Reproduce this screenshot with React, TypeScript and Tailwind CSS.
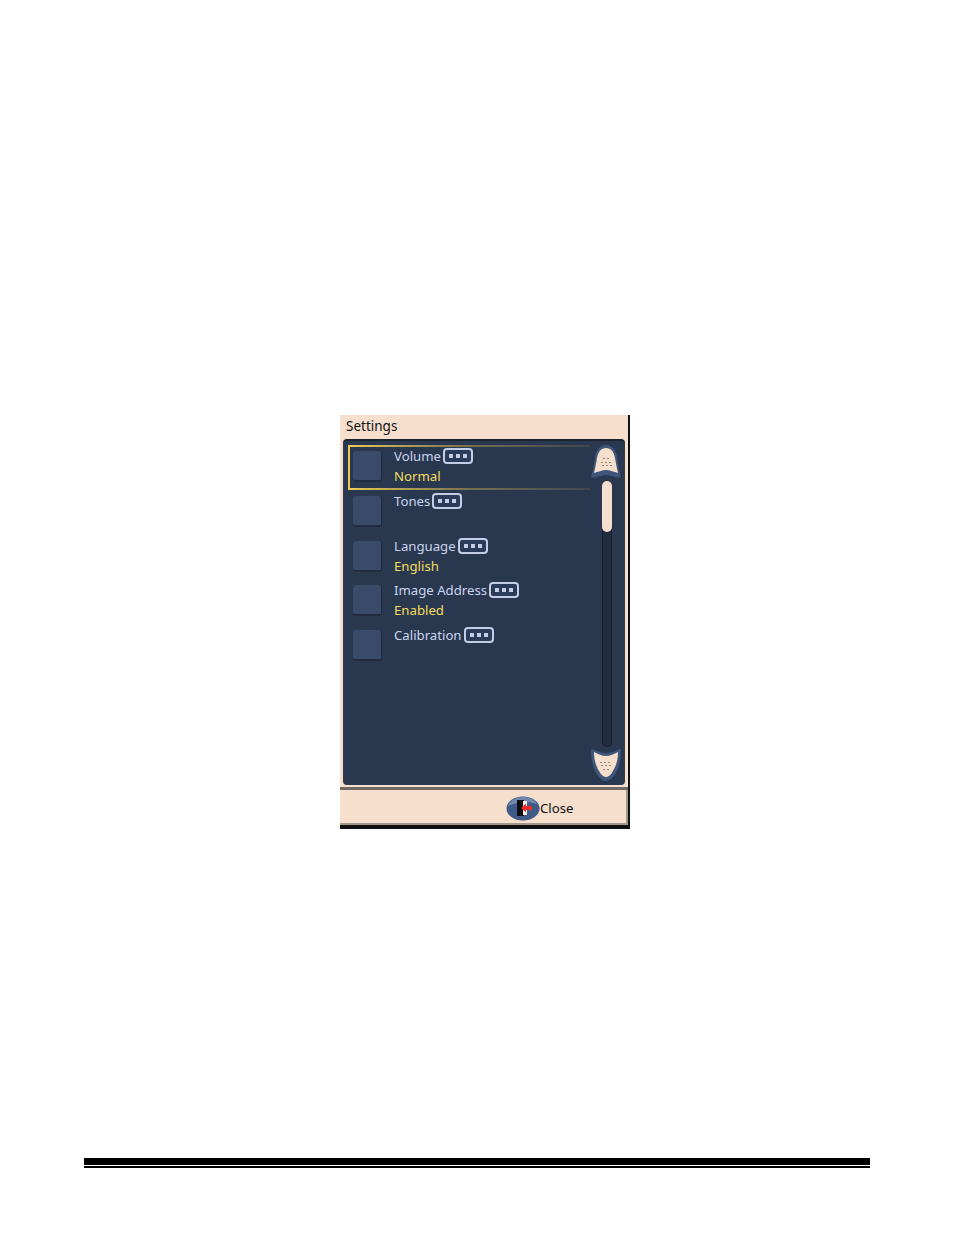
const ROWS = [
  { name: 'Volume', value: 'Normal', selected: true },
  { name: 'Tones' },
  { name: 'Language', value: 'English' },
  { name: 'Image Address', value: 'Enabled' },
  { name: 'Calibration' },
]

function MoreButton() {
  return (
    <span className="ml-[2px] inline-flex h-[16px] w-[30px] items-center justify-center gap-[3px] rounded-[4px] border-2 border-[#c3cde6] bg-[#2c3b58]">
      <span className="h-[4px] w-[4px] bg-[#c3cde6]" />
      <span className="h-[4px] w-[4px] bg-[#c3cde6]" />
      <span className="h-[4px] w-[4px] bg-[#c3cde6]" />
    </span>
  )
}

function Row({ name, value, selected }: { name: string; value?: string; selected?: boolean }) {
  return (
    <div className="relative flex h-[44.8px] pl-[5px] pt-[6px]">
      {selected && (
        <>
          <span className="absolute left-0 top-0 h-[2px] w-[242px] bg-gradient-to-r from-[#eccb54] via-[#77704f] to-[#3f4650]" />
          <span className="absolute bottom-0 left-0 h-[2px] w-[242px] bg-gradient-to-r from-[#eccb54] via-[#77704f] to-[#3f4650]" />
          <span className="absolute left-0 top-0 h-full w-[2px] bg-[#eccb54]" />
        </>
      )}
      <div className="h-[31px] w-[29px] rounded-[3px] border-b-2 border-r border-[#212c40] bg-[#3a4b69]" />
      <div className="ml-[12px] -mt-[5px] text-[13.200px] leading-[20px]">
        <div className="flex h-[20px] items-center text-[#c9d5ee]">
          {name}
          <MoreButton />
        </div>
        {value && <div className="text-[#f5de5c]">{value}</div>}
      </div>
    </div>
  )
}

function UpArrow() {
  return (
    <svg width="30" height="36" viewBox="0 0 30 36" className="block">
      <path d="M15 0 C21 0 25 5 26 12 C27 19 28 27 30 31 C29 33 27 33 24 32 C21 31 18 30 15 30 C12 30 9 31 6 32 C3 33 1 33 0 31 C2 27 3 19 4 12 C5 5 9 0 15 0Z" fill="#3d5679" />
      <path d="M15 3 C20 3 23 7 24 13 C25 19 26 24 27 28 C23 27 19 25 15 25 C11 25 7 27 3 28 C4 24 5 19 6 13 C7 7 10 3 15 3Z" fill="#f6dfcd" />
      <g fill="#8f887e">
        <rect x="12" y="13" width="2" height="1" /><rect x="16" y="13" width="2" height="1" />
        <rect x="10" y="17" width="2" height="1" /><rect x="14" y="17" width="2" height="1" /><rect x="18" y="17" width="2" height="1" />
        <rect x="11" y="20" width="2" height="1" /><rect x="15" y="20" width="2" height="1" /><rect x="19" y="20" width="2" height="1" />
      </g>
    </svg>
  )
}

function DownArrow() {
  return (
    <svg width="30" height="35" viewBox="0 0 30 35" className="block">
      <path d="M0 2 C5 3 10 6 15 6 C20 6 25 3 30 2 C30 13 28 20 25 26 C22 31 18 34 15 34 C12 34 8 31 5 26 C2 20 0 13 0 2Z" fill="#3d5679" />
      <path d="M3 5 C7 7 11 9 15 9 C19 9 23 7 27 5 C27 13 25 19 22 24 C20 28 17 30 15 30 C13 30 10 28 8 24 C5 19 3 13 3 5Z" fill="#f6dfcd" />
      <g fill="#8f887e">
        <rect x="9" y="15" width="2" height="1" /><rect x="13" y="15" width="2" height="1" /><rect x="17" y="15" width="2" height="1" />
        <rect x="10" y="18" width="2" height="1" /><rect x="14" y="18" width="2" height="1" /><rect x="18" y="18" width="2" height="1" />
        <rect x="12" y="22" width="2" height="1" /><rect x="16" y="22" width="2" height="1" />
      </g>
    </svg>
  )
}

function CloseIcon() {
  return (
    <svg width="34" height="25" viewBox="0 0 34 25" className="block">
      <ellipse cx="17" cy="12.500" rx="16.500" ry="12" fill="#3f5a85" />
      <path d="M2 10 C5 3 12 1 17 1 C23 1 29 3 31 8 C24 5 10 6 2 10Z" fill="#7088ae" />
      <rect x="11" y="4" width="7" height="16" fill="#0d0d12" />
      <rect x="17" y="5" width="4" height="14" fill="#f4f1ee" />
      <path d="M15 12 L20 7.500 V10 H26 V14 H20 V16.500Z" fill="#ee2b2b" />
    </svg>
  )
}

export default function App() {
  return (
    <div className="h-[1235px] w-[954px] bg-white pt-[415px] font-['Noto_Sans',sans-serif]">
      <div className="ml-[340px] h-[414px] w-[290px] border-b-4 border-r-2 border-[#111] bg-[#f6dfcd]">
        <div className="flex h-[24px] items-center pl-[6px] text-[13.500px] leading-none text-[#111]">Settings</div>

        <div className="ml-[3px] flex h-[346px] w-[282px] rounded-[4px] border-t-2 border-[#1b2230] bg-[#29374f] pl-[5px] pt-[4px]">
          <div className="w-[244px]">
            {ROWS.map(row => (
              <Row key={row.name} {...row} />
            ))}
          </div>
          <div className="ml-[-1px] flex w-[30px] flex-col items-center">
            <UpArrow />
            <div className="ml-[1px] flex h-[266px] w-[10px] flex-col rounded-[5px] border-x border-b border-[#18202f] bg-[#212c41]">
              <div className="-mx-px h-[51px] w-[10px] rounded-[5px] bg-[#f6dfcd]" />
            </div>
            <DownArrow />
          </div>
        </div>

        <div className="mt-[2px] h-[3px] bg-[#6f6a63]" />
        <div className="flex h-[35px] items-center border-b-2 border-r-2 border-[#a0968a] pl-[166px] pt-[3px]">
          <CloseIcon />
          <span className="mt-[1px] text-[13.200px] text-[#111]">Close</span>
        </div>
      </div>

      <div className="ml-[84px] mt-[329px] w-[786px]">
        <div className="h-[7px] bg-black" />
        <div className="mt-[1px] h-[2px] bg-black" />
      </div>
    </div>
  )
}
